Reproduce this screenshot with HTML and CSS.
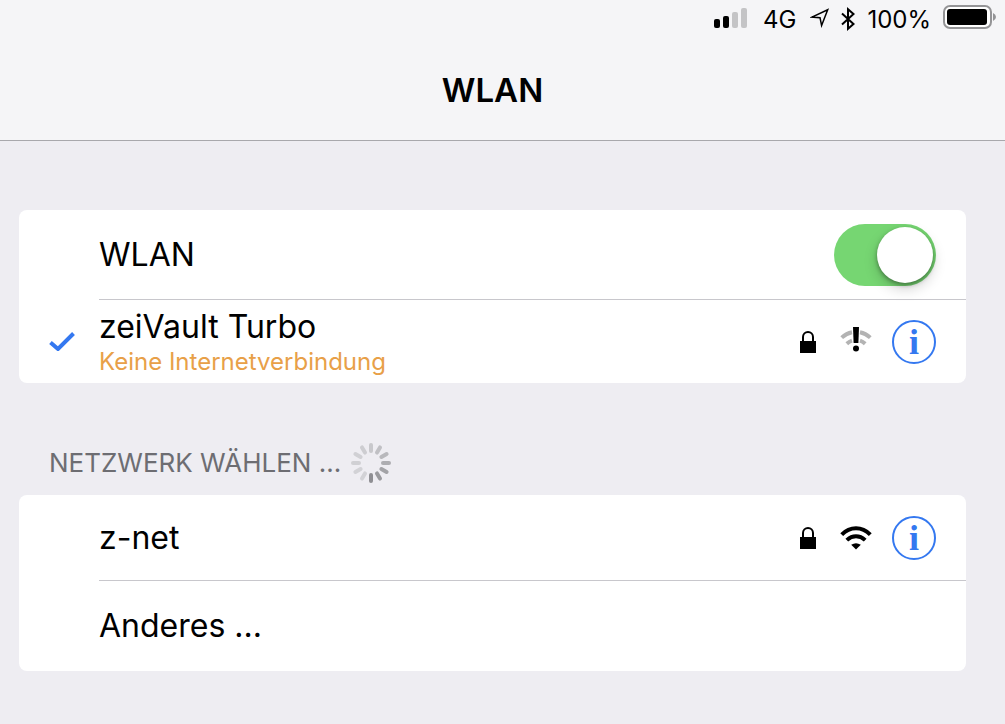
FILE: index.html
```
<!DOCTYPE html>
<html lang="de">
<head>
    <meta charset="UTF-8">
    <meta name="viewport" content="width=device-width, initial-scale=1.0">
    <title>WLAN</title>
    <link rel="stylesheet" href="styles.css">
</head>
<body>
    <!-- Shared icons -->
    <svg class="icon-defs" aria-hidden="true">
        <symbol id="lock" viewBox="0 0 16 22">
            <rect x="0" y="10" width="16" height="12" fill="#000"/>
            <path d="M3 11V6a5 5 0 0 1 10 0v5" fill="none" stroke="#000" stroke-width="2"/>
        </symbol>
        <symbol id="wifi" viewBox="0 -3 32 30">
            <path d="M1.7 8.6Q8 2.2 16 2.2T30.3 8.6" fill="none" stroke="#000" stroke-width="4"/>
            <path d="M6.8 14.1Q11 10.2 16 10.2T25.2 14.1" fill="none" stroke="#000" stroke-width="4"/>
            <path d="M11.2 18.8Q16 15.8 20.8 18.8L16 23.4Z" fill="#000"/>
        </symbol>
        <symbol id="wifi-alert" viewBox="0 -2 32 30">
            <path d="M1.7 8.6Q6.5 4.2 12 3.2M20 3.2Q25.5 4.2 30.3 8.6" fill="none" stroke="#b3b3b3" stroke-width="4"/>
            <path d="M6.8 14.8Q9.2 12.6 12 11.7M20 11.7Q22.8 12.6 25.2 14.8" fill="none" stroke="#b3b3b3" stroke-width="4"/>
            <path d="M13-2h6l-.6 16h-4.8z" fill="#000"/>
            <circle cx="16" cy="19.5" r="3" fill="#000"/>
        </symbol>
    </svg>

    <header class="top-bar">
        <div class="status-bar">
            <svg class="signal" width="34" height="20" viewBox="0 0 34 20">
                <rect x="0" y="11" width="6" height="9" rx="2" fill="#000"/>
                <rect x="9" y="8" width="6" height="12" rx="2" fill="#000"/>
                <rect x="18" y="4" width="6" height="16" rx="2" fill="#c4c4c6"/>
                <rect x="27" y="0" width="6" height="20" rx="2" fill="#c4c4c6"/>
            </svg>
            <span class="network">4G</span>
            <svg class="location" width="20" height="20" viewBox="0 0 20 20">
                <path d="M17.7 1.8L2 9.1L10 9.7L11.6 17.5Z" fill="none" stroke="#000" stroke-width="1.5"/>
            </svg>
            <svg class="bluetooth" width="14" height="24" viewBox="0 0 14 24">
                <path d="M1 6.5L12.5 17L7 21.8V2.2L12.5 7L1 17.5" fill="none" stroke="#000" stroke-width="2"/>
            </svg>
            <span class="percent">100%</span>
            <svg class="battery" width="54" height="24" viewBox="0 0 54 24">
                <rect x="1" y="1" width="47" height="22" rx="6" fill="#fff" stroke="#949496" stroke-width="2"/>
                <rect x="4" y="4" width="40" height="16" rx="3" fill="#000"/>
                <path d="M50 8q3 1.5 3 4t-3 4z" fill="#949496"/>
            </svg>
        </div>
        <h1 class="page-title">WLAN</h1>
    </header>

    <main class="content">
        <section class="card">
            <div class="row">
                <label class="row-body row-switch" for="wlanToggle">
                    <span class="name">WLAN</span>
                    <input class="switch" type="checkbox" id="wlanToggle" checked>
                </label>
            </div>
            <div class="row row-connected">
                <svg class="check" width="26" height="20" viewBox="0 0 26 20">
                    <path d="M1.5 11.5L9 18L24.5 2.5" fill="none" stroke="#3478f0" stroke-width="4"/>
                </svg>
                <div class="row-body">
                    <div class="labels">
                        <span class="name">zeiVault Turbo</span>
                        <span class="warning">Keine Internetverbindung</span>
                    </div>
                    <svg class="lock"><use href="#lock"/></svg>
                    <svg class="wifi"><use href="#wifi-alert"/></svg>
                    <button class="info" type="button">i</button>
                </div>
            </div>
        </section>

        <div class="section-header">
            <h2 class="section-title">NETZWERK WÄHLEN ...</h2>
            <svg class="spinner" width="40" height="40" viewBox="-20 -20 40 40" stroke-width="4" stroke-linecap="round">
                <path d="M0-12V-18" stroke="#c8c8cc"/>
                <path d="M0-12V-18" stroke="#c0c0c4" transform="rotate(30)"/>
                <path d="M0-12V-18" stroke="#b8b8bc" transform="rotate(60)"/>
                <path d="M0-12V-18" stroke="#adadb1" transform="rotate(90)"/>
                <path d="M0-12V-18" stroke="#a3a3a7" transform="rotate(120)"/>
                <path d="M0-12V-18" stroke="#9a9a9e" transform="rotate(150)"/>
                <path d="M0-12V-18" stroke="#8e8e93" transform="rotate(180)"/>
                <path d="M0-12V-18" stroke="#d2d2d6" transform="rotate(210)"/>
                <path d="M0-12V-18" stroke="#d2d2d6" transform="rotate(240)"/>
                <path d="M0-12V-18" stroke="#d0d0d4" transform="rotate(270)"/>
                <path d="M0-12V-18" stroke="#d0d0d4" transform="rotate(300)"/>
                <path d="M0-12V-18" stroke="#cdcdd1" transform="rotate(330)"/>
            </svg>
        </div>

        <section class="card">
            <div class="row">
                <div class="row-body row-network">
                    <span class="name">z-net</span>
                    <svg class="lock"><use href="#lock"/></svg>
                    <svg class="wifi"><use href="#wifi"/></svg>
                    <button class="info" type="button">i</button>
                </div>
            </div>
            <div class="row">
                <div class="row-body">
                    <span class="name">Anderes ...</span>
                </div>
            </div>
        </section>
    </main>
</body>
</html>
```
FILE: styles.css
```
:root {
    --bg-color: #eeedf2;
    --bar-color: #f5f5f7;
    --line-color: #c8c7cc;
    --blue: #3478f0;
    --orange: #e8a048;
    --green: #76d672;
}

* {
    box-sizing: border-box;
}

body {
    margin: 0;
    background: var(--bg-color);
    color: #000;
    font-family: Inter, "Liberation Sans", sans-serif;
}

.icon-defs {
    display: none;
}

svg {
    flex: none;
}

/* Header */
.top-bar {
    background: var(--bar-color);
    border-bottom: 1px solid #a8a8ac;
}

.status-bar {
    display: flex;
    justify-content: flex-end;
    align-items: center;
    height: 36px;
    padding-right: 8px;
    font-size: 24px;
    line-height: 36px;
}

.network {
    margin: 4px 14px 0 15px;
}

.bluetooth {
    margin: 2px 12px 0 11px;
}

.percent {
    margin: 4px 12px 0 0;
}

.battery {
    margin-bottom: 2px;
}

.page-title {
    margin: 0;
    padding: 34px 39px 30px 19px;
    font-size: 33px;
    font-weight: 600;
    line-height: 40px;
    text-align: center;
}

/* Lists */
.content {
    padding: 69px 39px 53px 19px;
}

.card {
    background: #fff;
    border-radius: 8px;
}

.row {
    display: flex;
    align-items: center;
    padding-left: 80px;
}

.row-body {
    display: flex;
    flex: 1;
    align-items: center;
    min-height: 91px;
    padding-right: 30px;
}

.row + .row .row-body {
    border-top: 1px solid var(--line-color);
}

.row-connected {
    padding-left: 30px;
}

.row-connected .row-body {
    min-height: 84px;
    margin-left: 24px;
}

.row-switch {
    min-height: 89px;
}

.row-network {
    min-height: 85px;
}

.name {
    flex: 1;
    font-size: 32px;
    line-height: 40px;
}

.labels {
    display: flex;
    flex: 1;
    flex-direction: column;
}

.warning {
    color: var(--orange);
    font-size: 24px;
    line-height: 30px;
}

.lock {
    width: 16px;
    height: 22px;
    margin-right: 24px;
}

.wifi {
    width: 32px;
    height: 30px;
    margin-right: 20px;
}

.info {
    width: 44px;
    height: 44px;
    padding: 0;
    border: 2px solid var(--blue);
    border-radius: 50%;
    background: none;
    color: var(--blue);
    font-family: "Liberation Serif", serif;
    font-size: 36px;
    font-weight: bold;
    line-height: 40px;
}

.switch {
    appearance: none;
    display: flex;
    align-items: center;
    justify-content: flex-start;
    width: 102px;
    height: 62px;
    margin: 0;
    padding: 3px;
    border-radius: 31px;
    background: #ddd;
}

.switch::before {
    content: "";
    width: 56px;
    height: 56px;
    border-radius: 50%;
    background: #fff;
    box-shadow: 0 6px 14px rgba(0, 0, 0, 0.18), 0 2px 4px rgba(0, 0, 0, 0.35);
}

.switch:checked {
    justify-content: flex-end;
    background: var(--green);
}

.section-header {
    display: flex;
    align-items: center;
    gap: 10px;
    padding: 60px 30px 12px;
}

.section-title {
    margin: 0;
    color: #6d6d72;
    font-size: 26px;
    font-weight: 400;
    line-height: 40px;
}
```
